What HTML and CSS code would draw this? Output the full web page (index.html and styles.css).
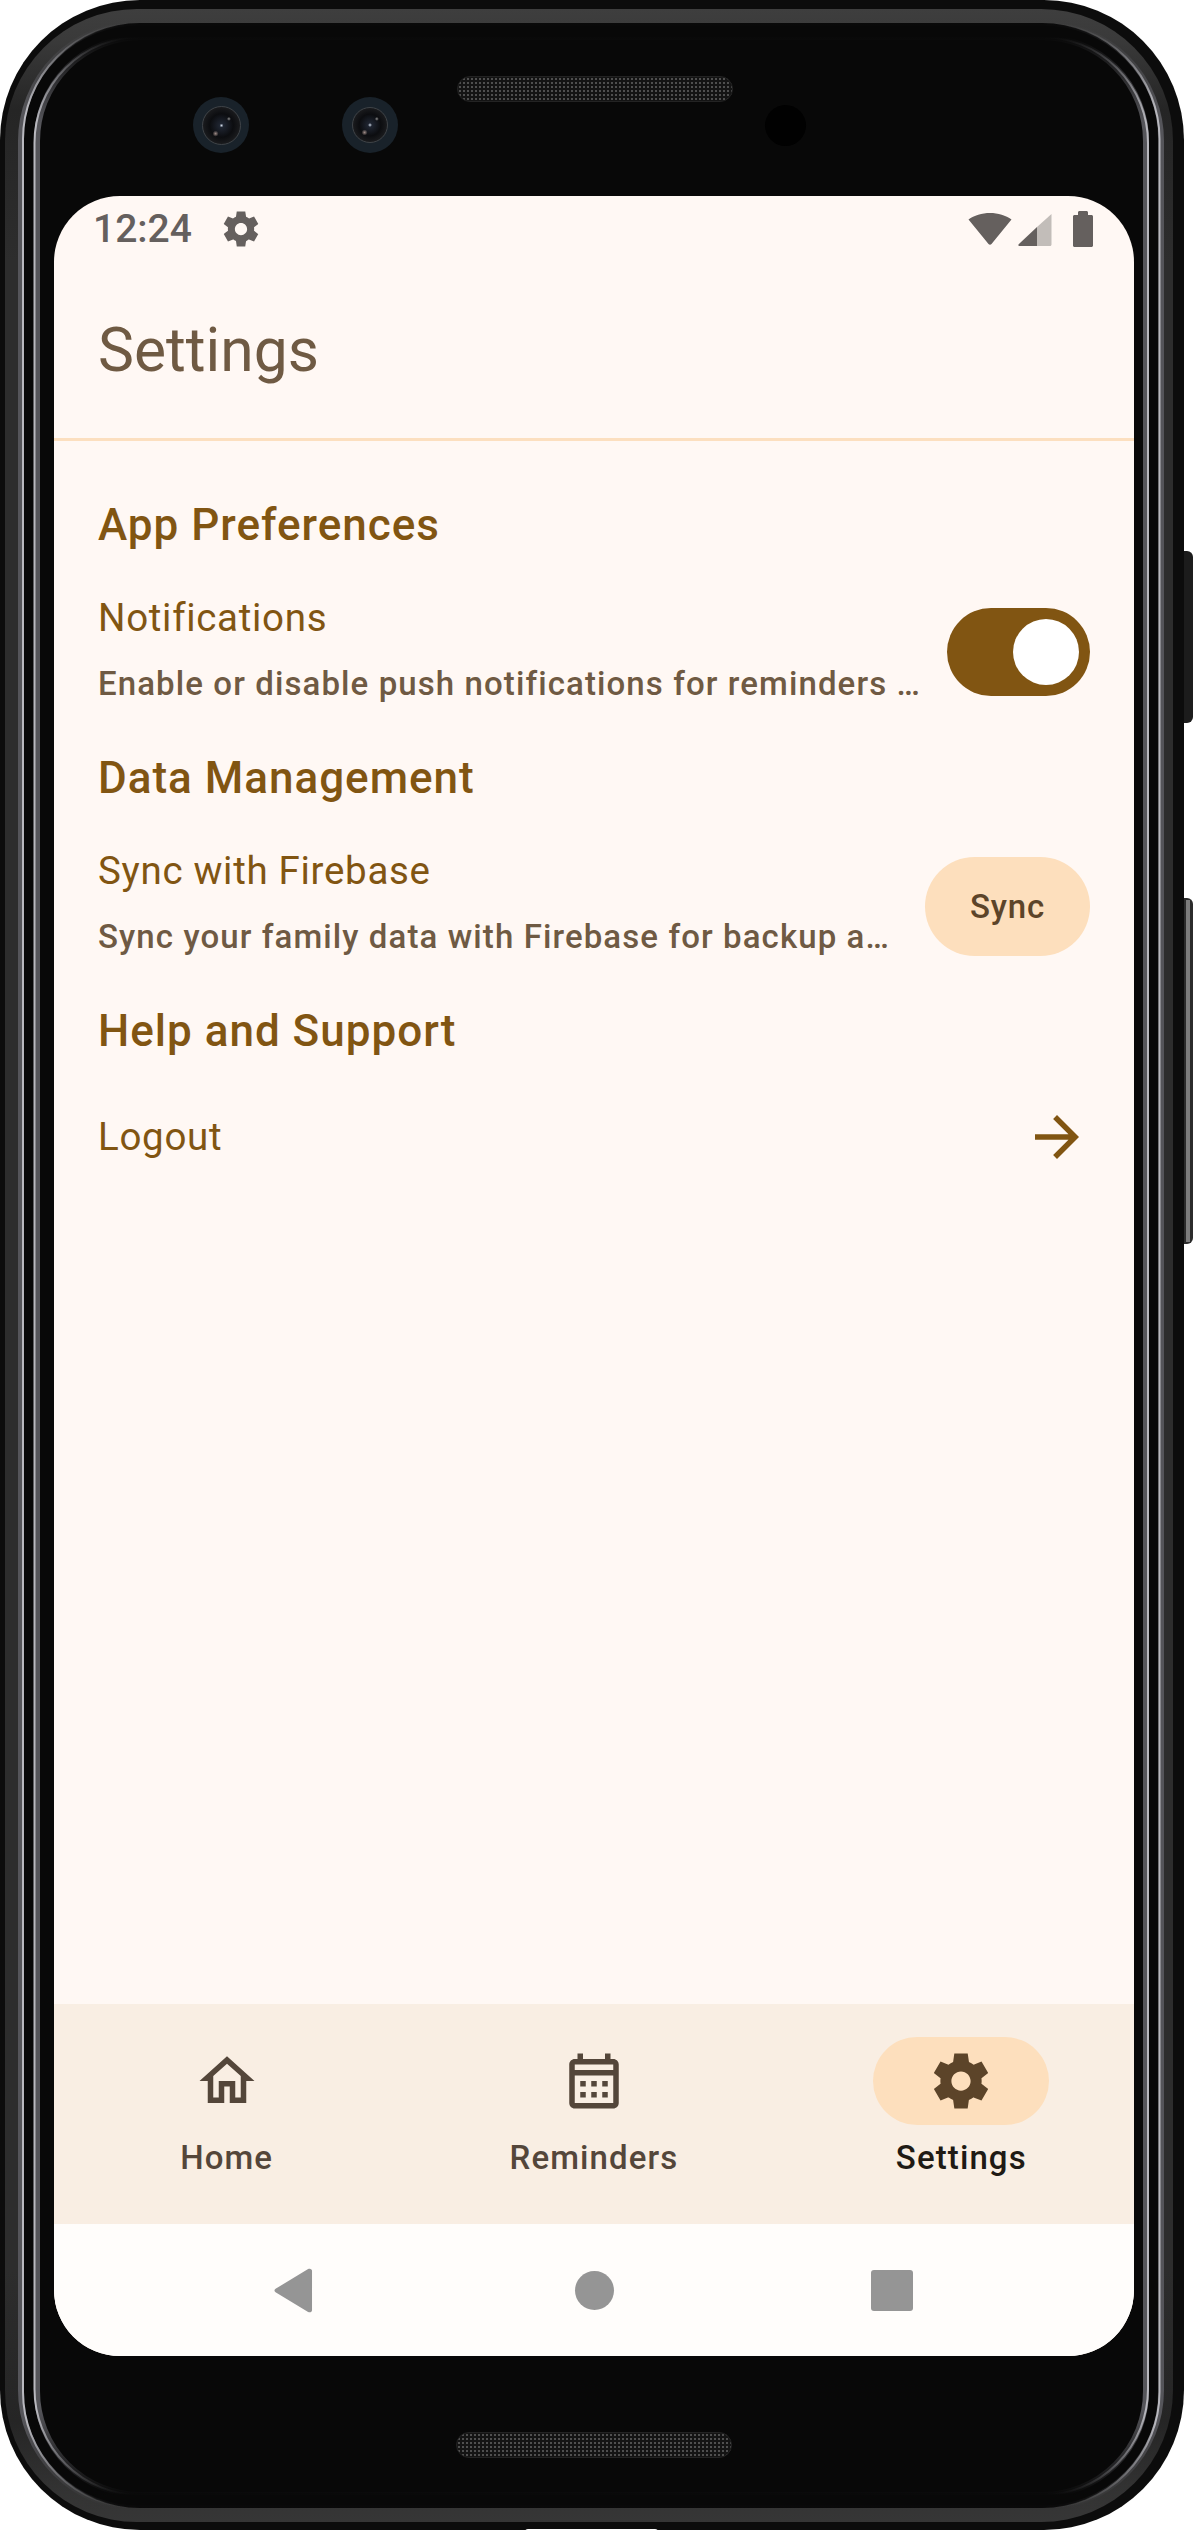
FILE: index.html
```html
<!DOCTYPE html>
<html>

<head>
    <title>Settings</title>
    <link rel="stylesheet" href="styles.css">
</head>

<body>
    <div class="device">
        <svg class="frame" width="1194" height="2532" viewBox="0 0 1194 2532">
            <defs>
                <linearGradient id="ring-bright" x1="0" y1="0" x2="0" y2="1">
                    <stop offset="0" stop-color="#b8b8be" stop-opacity="0"></stop>
                    <stop offset="0.035" stop-color="#b8b8be"></stop>
                    <stop offset="0.965" stop-color="#b8b8be"></stop>
                    <stop offset="1" stop-color="#b8b8be" stop-opacity="0"></stop>
                </linearGradient>
                <linearGradient id="ring-soft" x1="0" y1="0" x2="0" y2="1">
                    <stop offset="0" stop-color="#55555a" stop-opacity="0"></stop>
                    <stop offset="0.035" stop-color="#55555a"></stop>
                    <stop offset="0.965" stop-color="#55555a"></stop>
                    <stop offset="1" stop-color="#55555a" stop-opacity="0"></stop>
                </linearGradient>
                <linearGradient id="band" x1="0" y1="0" x2="0" y2="1">
                    <stop offset="0" stop-color="#3e3e3e"></stop>
                    <stop offset="0.012" stop-color="#3a3a3a"></stop>
                    <stop offset="0.04" stop-color="#252525"></stop>
                    <stop offset="0.1" stop-color="#2d2d2d"></stop>
                    <stop offset="0.9" stop-color="#2d2d2d"></stop>
                    <stop offset="0.96" stop-color="#252525"></stop>
                    <stop offset="0.988" stop-color="#333333"></stop>
                    <stop offset="1" stop-color="#363636"></stop>
                </linearGradient>
            </defs>
            <rect x="1176" y="551" width="17" height="172" rx="6" fill="#1c1c1c"></rect>
            <rect x="1176" y="898" width="17" height="346" rx="6" fill="#2b2b2b"></rect>
            <rect x="1186" y="900" width="4" height="342" fill="#7d7d7d"></rect>
            <rect x="0" y="0" width="1184" height="2530" rx="140" fill="#0c0c0c"></rect>
            <rect x="5" y="9" width="1168" height="2513" rx="132" fill="url(#band)"></rect>
            <rect x="24" y="23" width="1134" height="2485" rx="116" fill="#080808"></rect>
            <rect x="20.500" y="23" width="1141" height="2485" rx="118" fill="none" stroke="url(#ring-soft)" stroke-width="5"></rect>
            <rect x="23" y="23" width="1136.500" height="2485" rx="116" fill="none" stroke="url(#ring-bright)" stroke-width="2"></rect>
            <rect x="37" y="37" width="1109" height="2458" rx="104" fill="none" stroke="url(#ring-soft)" stroke-width="6"></rect>
            <rect x="34.500" y="37" width="1113.500" height="2458" rx="106" fill="none" stroke="url(#ring-bright)" stroke-width="2"></rect>
            <rect x="525" y="2529" width="133" height="6" rx="3" fill="#ffffff"></rect>
        </svg>

        <div class="bezel-top">
            <div class="camera">
                <div class="lens"></div>
            </div>
            <div class="camera camera-right">
                <div class="lens lens-small"></div>
            </div>
            <div class="speaker speaker-top"></div>
            <div class="sensor"></div>
        </div>

        <div class="screen">
            <div class="status-bar">
                <div class="status-left">
                    <span class="clock">12:24</span>
                    <svg class="status-gear" viewBox="0 0 24 24">
                        <path d="M19.44 12.99l-.01.02c.04-.33.08-.67.08-1.01 0-.34-.03-.66-.07-.99l.01.02 2.44-1.92-2.43-4.22-2.87 1.16.01.01c-.52-.4-1.09-.74-1.71-1h.01L14.44 2H9.57l-.44 3.07h.01c-.62.26-1.19.6-1.71 1l.01-.01-2.88-1.17-2.44 4.22 2.44 1.92.01-.02c-.04.33-.07.65-.07.99 0 .34.03.68.08 1.01l-.01-.02-2.1 1.65-.33.26 2.43 4.2 2.88-1.15-.02-.04c.53.41 1.1.75 1.73 1.01h-.03L9.58 22h4.85s.03-.18.06-.42l.38-2.65h-.01c.62-.26 1.2-.6 1.73-1.01l-.02.04 2.88 1.15 2.43-4.2s-.14-.12-.33-.26l-2.11-1.66zM12 15.5c-1.93 0-3.5-1.57-3.5-3.5s1.57-3.5 3.5-3.5 3.5 1.57 3.5 3.5-1.57 3.5-3.5 3.5z"></path>
                    </svg>
                </div>
                <div class="status-right">
                    <svg class="wifi" viewBox="0 0 44 32">
                        <path d="M0.500 6.500C6 2.500 14 0 22 0s16 2.500 21.500 6.500L23.500 31c-.8 1-2.200 1-3 0z"></path>
                    </svg>
                    <svg class="signal" viewBox="0 0 34 33">
                        <path class="signal-empty" d="M33.500 1v30.500c0 .8-.6 1.500-1.500 1.500H19V14z"></path>
                        <path d="M19 14V33H1.500c-1 0-1.500-1-.8-1.800z"></path>
                    </svg>
                    <svg class="battery" viewBox="0 0 20 36">
                        <path d="M5 4V1.500C5 .7 5.600 0 6.500 0h7c.8 0 1.500.7 1.500 1.500V4h3.500c.8 0 1.500.7 1.500 1.500v29c0 .8-.7 1.500-1.500 1.500H1.500C.7 36 0 35.300 0 34.500v-29C0 4.700.7 4 1.500 4z"></path>
                    </svg>
                </div>
            </div>

            <div class="top-bar">
                <h1>Settings</h1>
            </div>

            <div class="content">
                <h2>App Preferences</h2>
                <div class="row">
                    <div class="row-text">
                        <div class="row-title">Notifications</div>
                        <div class="row-desc">Enable or disable push notifications for reminders and updates</div>
                    </div>
                    <div class="switch">
                        <div class="switch-thumb"></div>
                    </div>
                </div>

                <h2>Data Management</h2>
                <div class="row">
                    <div class="row-text">
                        <div class="row-title">Sync with Firebase</div>
                        <div class="row-desc">Sync your family data with Firebase for backup and sharing</div>
                    </div>
                    <button type="button" class="sync-button">Sync</button>
                </div>

                <h2>Help and Support</h2>
                <div class="row row-link">
                    <div class="row-title">Logout</div>
                    <svg class="arrow" viewBox="0 0 24 24">
                        <path d="M12 4l-1.410 1.410L16.170 11H4v2h12.170l-5.580 5.590L12 20l8-8z"></path>
                    </svg>
                </div>
            </div>

            <div class="bottom-nav">
                <div class="nav-item">
                    <div class="nav-icon">
                        <svg viewBox="0 0 24 24">
                            <path d="M12 5.690l5 4.500V18h-2v-6H9v6H7v-7.810l5-4.500M12 3L2 12h3v8h6v-6h2v6h6v-8h3L12 3z"></path>
                        </svg>
                    </div>
                    <span>Home</span>
                </div>
                <div class="nav-item">
                    <div class="nav-icon">
                        <svg viewBox="0 0 24 24">
                            <path d="M19 4h-1V2h-2v2H8V2H6v2H5c-1.100 0-2 .9-2 2v14c0 1.100.9 2 2 2h14c1.100 0 2-.9 2-2V6c0-1.100-.9-2-2-2zm0 16H5V10h14v10zm0-12H5V6h14v2zM9 14H7v-2h2v2zm4 0h-2v-2h2v2zm4 0h-2v-2h2v2zm-8 4H7v-2h2v2zm4 0h-2v-2h2v2zm4 0h-2v-2h2v2z"></path>
                        </svg>
                    </div>
                    <span>Reminders</span>
                </div>
                <div class="nav-item nav-item-active">
                    <div class="nav-icon">
                        <svg viewBox="0 0 24 24">
                            <path d="M19.44 12.99l-.01.02c.04-.33.08-.67.08-1.01 0-.34-.03-.66-.07-.99l.01.02 2.44-1.92-2.43-4.22-2.87 1.16.01.01c-.52-.4-1.09-.74-1.71-1h.01L14.44 2H9.57l-.44 3.07h.01c-.62.26-1.19.6-1.71 1l.01-.01-2.88-1.17-2.44 4.22 2.44 1.92.01-.02c-.04.33-.07.65-.07.99 0 .34.03.68.08 1.01l-.01-.02-2.1 1.65-.33.26 2.43 4.2 2.88-1.15-.02-.04c.53.41 1.1.75 1.73 1.01h-.03L9.58 22h4.85s.03-.18.06-.42l.38-2.65h-.01c.62-.26 1.2-.6 1.73-1.01l-.02.04 2.88 1.15 2.43-4.2s-.14-.12-.33-.26l-2.11-1.66zM12 15.500c-1.930 0-3.500-1.570-3.500-3.500s1.570-3.500 3.500-3.500 3.500 1.570 3.500 3.500-1.570 3.500-3.500 3.500z"></path>
                        </svg>
                    </div>
                    <span>Settings</span>
                </div>
            </div>

            <div class="system-nav">
                <svg class="sys-back" viewBox="0 0 40 46">
                    <path d="M39 3v40c0 2-2 3-4 2L2 25c-2-1-2-3 0-4L35 1c2-1 4 0 4 2z"></path>
                </svg>
                <div class="sys-home"></div>
                <div class="sys-recent"></div>
            </div>
        </div>

        <div class="bezel-bottom">
            <div class="speaker"></div>
        </div>
    </div>
</body>

</html>
```
FILE: styles.css
```css
* {
    box-sizing: border-box;
}

html,
body {
    margin: 0;
    background-color: #fff;
}

body {
    font-family: Roboto, sans-serif;
    width: 1194px;
    height: 2532px;
    overflow: hidden;
}

.device {
    position: relative;
    width: 1194px;
    height: 2532px;
    padding-left: 54px;
    display: flex;
    flex-direction: column;
}

.frame {
    position: absolute;
    left: 0;
    top: 0;
}

/* bezel parts */
.bezel-top {
    position: relative;
    height: 196px;
    width: 1080px;
    display: flex;
    align-items: flex-start;
}

.camera {
    width: 56px;
    height: 56px;
    margin-left: 139px;
    margin-top: 97px;
    border-radius: 50%;
    background-color: #19222a;
    display: flex;
    align-items: center;
    justify-content: center;
}

.camera-right {
    margin-left: 93px;
}

.lens {
    width: 39px;
    height: 39px;
    border-radius: 50%;
    border: 1px solid #3f4347;
    background:
        radial-gradient(circle at 50% 50%, #cfd8e6 0, transparent 2px),
        radial-gradient(circle at 70% 32%, #8f8f8f 0, transparent 2px),
        radial-gradient(circle at 34% 72%, #a08d88 0, transparent 3px),
        radial-gradient(circle at 50% 50%, #232a38 0, #0c0d10 45%, #2a2b2d 100%);
}

.lens-small {
    width: 36px;
    height: 36px;
}

.speaker {
    width: 276px;
    height: 26px;
    border-radius: 13px;
    border: 1px solid #232323;
    background-color: #141414;
    background-image: radial-gradient(circle, #4f4f4f 1px, transparent 1.300px);
    background-size: 4px 4px;
}

.speaker-top {
    margin-left: 59px;
    margin-top: 76px;
}

.sensor {
    width: 41px;
    height: 41px;
    margin-left: 32px;
    margin-top: 105px;
    border-radius: 50%;
    background-color: #010101;
}

.bezel-bottom {
    position: relative;
    width: 1080px;
    height: 176px;
    padding-top: 76px;
    display: flex;
    justify-content: center;
}

/* screen */
.screen {
    position: relative;
    width: 1080px;
    height: 2160px;
    border-radius: 66px;
    overflow: hidden;
    background-color: #fff8f4;
    display: flex;
    flex-direction: column;
}

.status-bar {
    height: 66px;
    padding: 0 41px 0 39px;
    display: flex;
    align-items: center;
    justify-content: space-between;
    color: #65605e;
}

.status-left {
    display: flex;
    align-items: center;
    gap: 28px;
}

.clock {
    font-size: 39px;
    font-weight: 500;
}

.status-gear {
    width: 42px;
    height: 42px;
    fill: #65605e;
}

.status-right {
    display: flex;
    align-items: center;
    gap: 6px;
}

.status-right svg {
    fill: #65605e;
}

.wifi {
    width: 44px;
    height: 32px;
}

.signal {
    width: 34px;
    height: 33px;
}

.signal .signal-empty {
    fill: #c2bdb9;
}

.battery {
    width: 20px;
    height: 36px;
    margin-left: 15px;
}

.top-bar {
    height: 176px;
    padding-left: 44px;
    display: flex;
    align-items: center;
}

h1 {
    margin: 0;
    font-size: 60.500px;
    font-weight: 400;
    color: #6f5a43;
}

.content {
    flex: 1;
    border-top: 3px solid #fcdfbf;
    padding: 12px 44px 0;
    display: flex;
    flex-direction: column;
}

h2 {
    margin: 39px 0 0;
    font-size: 44px;
    line-height: 66px;
    font-weight: 500;
    letter-spacing: 1px;
    color: #815512;
}

.row {
    margin-top: 27px;
    display: flex;
    align-items: center;
    justify-content: space-between;
    gap: 26px;
}

.row-text {
    flex: 1;
    min-width: 0;
}

.row-title {
    font-size: 38.500px;
    line-height: 66px;
    letter-spacing: 0.690px;
    color: #815512;
}

.row-desc {
    margin-top: 11px;
    font-size: 33px;
    line-height: 44px;
    font-weight: 500;
    letter-spacing: 1.100px;
    color: #6f5a43;
    white-space: nowrap;
    overflow: hidden;
    text-overflow: ellipsis;
}

.switch {
    width: 143px;
    height: 88px;
    margin-top: 12px;
    border-radius: 44px;
    background-color: #815512;
    padding: 11px;
    display: flex;
    justify-content: flex-end;
    flex-shrink: 0;
}

.switch-thumb {
    width: 66px;
    height: 66px;
    border-radius: 50%;
    background-color: #fff;
}

.sync-button {
    height: 99px;
    width: 165px;
    margin-top: 16px;
    border: none;
    border-radius: 50px;
    background-color: #fddfbd;
    color: #5c4429;
    font-family: Roboto, sans-serif;
    font-size: 33px;
    font-weight: 500;
    letter-spacing: 0.800px;
    padding: 0;
    flex-shrink: 0;
}

h2 + .row-link {
    height: 132px;
    margin-top: 7px;
}

.arrow {
    width: 66px;
    height: 66px;
    fill: #815512;
}

/* bottom navigation */
.bottom-nav {
    height: 220px;
    background-color: #f9eee3;
    display: flex;
    gap: 22px;
}

.nav-item {
    flex: 1;
    padding-top: 33px;
    display: flex;
    flex-direction: column;
    align-items: center;
    font-size: 33px;
    font-weight: 500;
    letter-spacing: 1.100px;
    color: #54463a;
}

.nav-icon {
    width: 176px;
    height: 88px;
    border-radius: 44px;
    display: flex;
    align-items: center;
    justify-content: center;
    margin-bottom: 13px;
}

.nav-icon svg {
    width: 66px;
    height: 66px;
    fill: #54463a;
}

.nav-item-active {
    color: #201a14;
}

.nav-item-active .nav-icon {
    background-color: #fddfbd;
}

.nav-item-active .nav-icon svg {
    fill: #5c4429;
}

/* android buttons */
.system-nav {
    height: 132px;
    padding-left: 220px;
    background-color: #fffdfb;
    display: flex;
    align-items: center;
}

.sys-back {
    width: 39px;
    height: 45px;
    fill: #959595;
}

.sys-home {
    width: 39px;
    height: 39px;
    margin-left: 262px;
    border-radius: 50%;
    background-color: #959595;
}

.sys-recent {
    width: 42px;
    height: 41px;
    margin-left: 257px;
    border-radius: 3px;
    background-color: #959595;
}
```
